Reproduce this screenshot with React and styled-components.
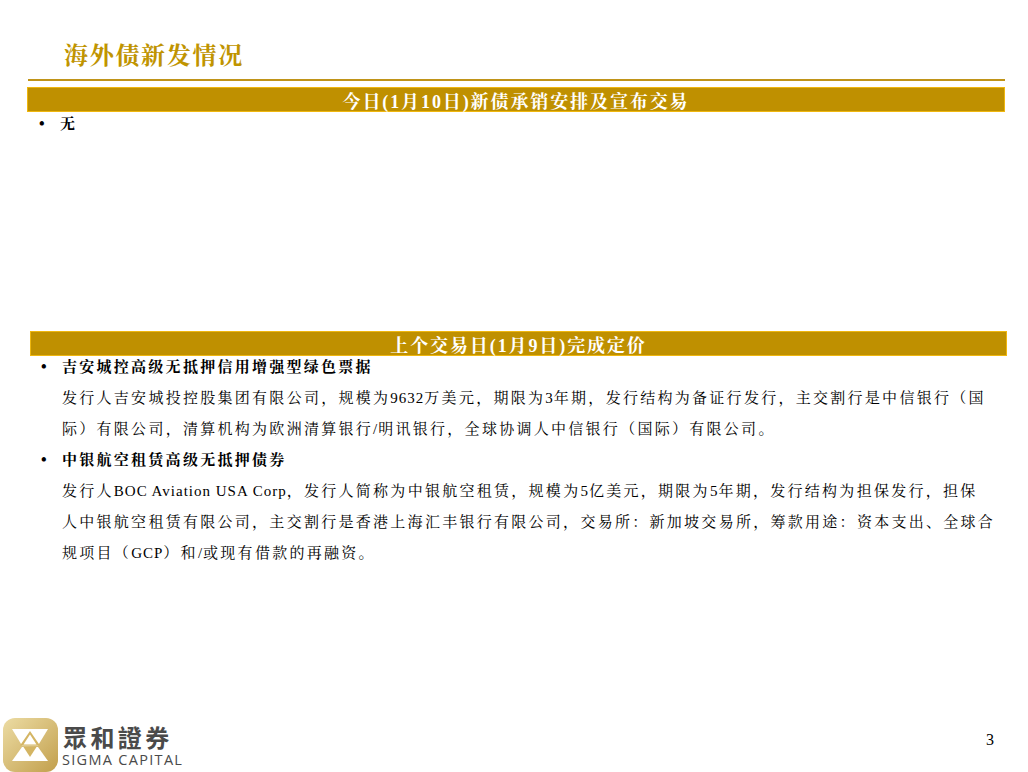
import React from 'react';
import styled, { createGlobalStyle } from 'styled-components';

const Global = createGlobalStyle`
  html, body { margin: 0; padding: 0; background: #fff; }
`;
const serif = `"Liberation Serif", "Noto Serif CJK SC", "Noto Sans CJK SC", serif`;

const Page = styled.div`
  width: 1028px;
  height: 772px;
  display: flex;
  flex-direction: column;
  font-family: ${serif};
  color: #000;
  overflow: hidden;
`;
const Title = styled.h1`
  margin: 0;
  padding: 41px 0 0 64px;
  height: 38px;
  font-size: 24px;
  line-height: 31px;
  letter-spacing: 1.7px;
  font-weight: 700;
  color: #c09400;
`;
const Rule = styled.div`
  margin: 0 23px 0 28px;
  height: 2px;
  background: #c09418;
`;
const Banner = styled.div`
  margin: ${p => p.$top}px ${p => p.$right}px 0 ${p => p.$left}px;
  height: 25px;
  background: #bf9000;
  border: 1px solid #efb70f;
  box-sizing: border-box;
  color: #fff;
  text-align: center;
  font-size: 18px;
  line-height: 28px;
  font-weight: 700;
  letter-spacing: 1.9px;
`;
const Head = styled.div`
  display: flex;
  margin: ${p => p.$top || 0}px 0 5px ${p => p.$left}px;
  font-size: 15px;
  line-height: 22px;
  font-weight: 700;
  letter-spacing: 2.27px;
`;
const Dot = styled.span`
  width: 21px;
  font-size: 16px;
  letter-spacing: 0;
`;
const Body = styled.p`
  margin: 0 0 0 62px;
  font-size: 15px;
  line-height: 31px;
  letter-spacing: 2.28px;
  white-space: nowrap;
`;
const Latin = styled.span`
  letter-spacing: 1px;
`;
const Spacer = styled.div`
  flex: 1;
`;
const Footer = styled.div`
  display: flex;
  align-items: flex-end;
  justify-content: space-between;
  padding: 0 34px 0 3px;
  height: 54px;
`;
const Brand = styled.div`
  display: flex;
  align-items: flex-start;
  gap: 5px;
`;
const BrandText = styled.div`
  display: flex;
  flex-direction: column;
  padding-top: 6px;
  color: #4a4a4a;
`;
const BrandCn = styled.span`
  font-family: "Noto Sans CJK SC", sans-serif;
  font-size: 24px;
  line-height: 26px;
  font-weight: 700;
  letter-spacing: 3.4px;
`;
const BrandEn = styled.span`
  font-family: "Open Sans", sans-serif;
  font-size: 14.5px;
  line-height: 20px;
  letter-spacing: 1.3px;
  margin-left: -1px;
  white-space: nowrap;
`;
const PageNo = styled.span`
  font-size: 16px;
  margin-bottom: 23px;
`;

const Logo = () => (
  <svg width="55" height="54" viewBox="3 718 55 54">
    <defs>
      <linearGradient id="g" x1="0" y1="0" x2="1" y2="1">
        <stop offset="0" stopColor="#ecdca4" />
        <stop offset="1" stopColor="#c29f4c" />
      </linearGradient>
    </defs>
    <rect x="3" y="718" width="55" height="54" rx="12" fill="url(#g)" />
    <polygon points="12,729 48,729 38,745.5 22,745.5" fill="#fff" />
    <polygon points="30,731 40,745.5 20,745.5" fill="#d4b563" />
    <polygon points="30,734.5 36.5,744.5 23.5,744.5" fill="#fff" />
    <polygon points="12,761 48,761 38,747 22,747" fill="#fff" />
    <polygon points="23.5,747 36.5,747 30,757" fill="#d4b563" />
  </svg>
);

export default function App() {
  return (
    <Page>
      <Global />
      <Title>海外债新发情况</Title>
      <Rule />
      <Banner $top={6} $left={27} $right={23}>今日(1月10日)新债承销安排及宣布交易</Banner>
      <Head $left={39} $top={1}><Dot>•</Dot>无</Head>
      <Banner $top={191} $left={30} $right={21}>上个交易日(1月9日)完成定价</Banner>
      <Head $left={41}><Dot>•</Dot>吉安城控高级无抵押信用增强型绿色票据</Head>
      <Body>
        发行人吉安城投控股集团有限公司，规模为<Latin>9632</Latin>万美元，期限为<Latin>3</Latin>年期，发行结构为备证行发行，主交割行是中信银行（国<br />
        际）有限公司，清算机构为欧洲清算银行<Latin>/</Latin>明讯银行，全球协调人中信银行（国际）有限公司。
      </Body>
      <Head $left={41} $top={4}><Dot>•</Dot>中银航空租赁高级无抵押债券</Head>
      <Body>
        发行人<Latin>BOC Aviation USA Corp</Latin>，发行人简称为中银航空租赁，规模为<Latin>5</Latin>亿美元，期限为<Latin>5</Latin>年期，发行结构为担保发行，担保<br />
        人中银航空租赁有限公司，主交割行是香港上海汇丰银行有限公司，交易所：新加坡交易所，筹款用途：资本支出、全球合<br />
        规项目（<Latin>GCP</Latin>）和<Latin>/</Latin>或现有借款的再融资。
      </Body>
      <Spacer />
      <Footer>
        <Brand>
          <Logo />
          <BrandText>
            <BrandCn>眾和證券</BrandCn>
            <BrandEn>SIGMA CAPITAL</BrandEn>
          </BrandText>
        </Brand>
        <PageNo>3</PageNo>
      </Footer>
    </Page>
  );
}
